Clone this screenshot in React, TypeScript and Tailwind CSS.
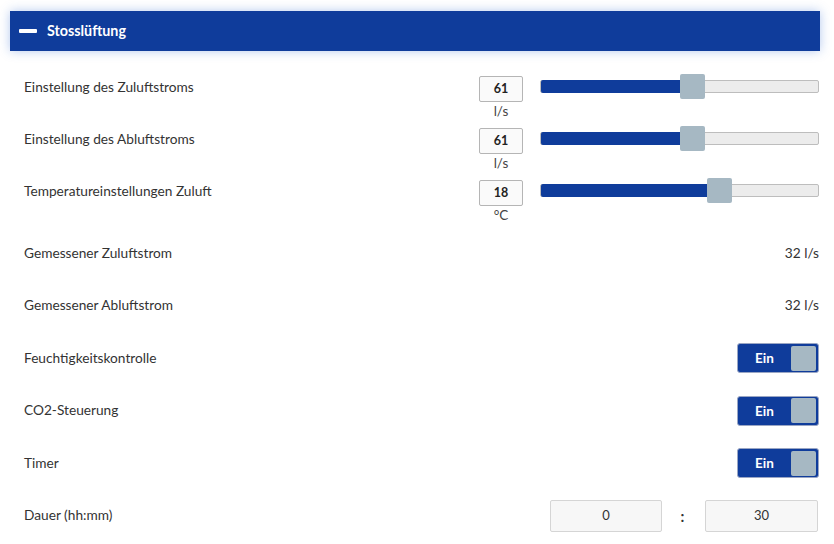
import React from 'react';

const BLUE = 'bg-[#0f3c9b]';

const SliderRow: React.FC<{ label: string; value: number; unit: string; pct: number }> = ({ label, value, unit, pct }) => (
  <div className="flex h-[52px] items-start pt-[10px]">
    <div className="flex h-[22px] flex-1 items-center">{label}</div>
    <div className="flex w-[44px] flex-col items-center">
      <div className="flex h-[26px] w-[44px] items-center justify-center rounded-[2px] border border-[#b5b5b5] bg-[#fafafa] text-[12.5px] font-bold text-[#222]">
        {value}
      </div>
      <div className="mt-[1px] text-[13.5px] leading-[16px] text-[#444]">{unit}</div>
    </div>
    <div className="ml-[17px] flex h-[21px] w-[279px] items-center">
      <div className="relative h-[13px] w-full rounded-[2px] border border-[#bdbdbd] bg-[#ececec]">
        <div className={`absolute left-0 top-[-1px] h-[13px] rounded-l-[2px] ${BLUE}`} style={{ width: `${pct}%` }} />
        <div
          className="absolute top-[-7px] h-[25px] w-[25px] rounded-[2px] bg-[#a6b8c3]"
          style={{ left: `calc(${pct}%)` }}
        />
      </div>
    </div>
  </div>
);

const ValueRow: React.FC<{ label: string; value: string }> = ({ label, value }) => (
  <div className="flex h-[52.5px] items-center justify-between">
    <div>{label}</div>
    <div className="text-[#333]">{value}</div>
  </div>
);

const ToggleRow: React.FC<{ label: string }> = ({ label }) => (
  <div className="flex h-[52.5px] items-center justify-between">
    <div>{label}</div>
    <div className={`flex h-[30px] w-[82px] items-center rounded-[3px] border border-[#9aa6c4] ${BLUE} pr-[2px]`}>
      <div className="flex-1 text-center text-[13.5px] font-bold text-white">Ein</div>
      <div className="h-[25px] w-[25px] rounded-[2px] bg-[#a6b8c3]" />
    </div>
  </div>
);

export default function App() {
  return (
    <div className="h-[544px] w-[834px] overflow-hidden bg-white text-[13.7px] text-[#333]" style={{ fontFamily: 'Lato, "Liberation Sans", sans-serif' }}>
      <div className="px-[10px] pt-[11px]">
        <div className={`mr-[4px] flex h-[40px] items-center ${BLUE} pl-[9px] shadow-[0_0_10px_rgba(40,100,210,0.35)]`}>
          <div className="h-[4px] w-[18px] rounded-[1px] bg-white" />
          <div className="ml-[10px] text-[14.3px] font-bold text-white">Stosslüftung</div>
        </div>
      </div>
      <div className="mt-[15px] pl-[24px] pr-[15px]">
        <SliderRow label="Einstellung des Zuluftstroms" value={61} unit="l/s" pct={50} />
        <SliderRow label="Einstellung des Abluftstroms" value={61} unit="l/s" pct={50} />
        <SliderRow label="Temperatureinstellungen Zuluft" value={18} unit="°C" pct={60} />
        <div className="h-[5px]" />
        <ValueRow label="Gemessener Zuluftstrom" value="32 l/s" />
        <ValueRow label="Gemessener Abluftstrom" value="32 l/s" />
        <ToggleRow label="Feuchtigkeitskontrolle" />
        <ToggleRow label="CO2-Steuerung" />
        <ToggleRow label="Timer" />
        <div className="flex h-[52.5px] items-center">
          <div className="flex-1">Dauer (hh:mm)</div>
          <div className="flex h-[32px] w-[112px] items-center justify-center rounded-[2px] border border-[#d5d5d5] bg-[#f7f7f7] text-[13px]">0</div>
          <div className="w-[43px] pr-[2px] text-center text-[15px] font-bold">:</div>
          <div className="mr-[1px] flex h-[32px] w-[113px] items-center justify-center rounded-[2px] border border-[#d5d5d5] bg-[#f7f7f7] text-[13px]">30</div>
        </div>
      </div>
    </div>
  );
}
